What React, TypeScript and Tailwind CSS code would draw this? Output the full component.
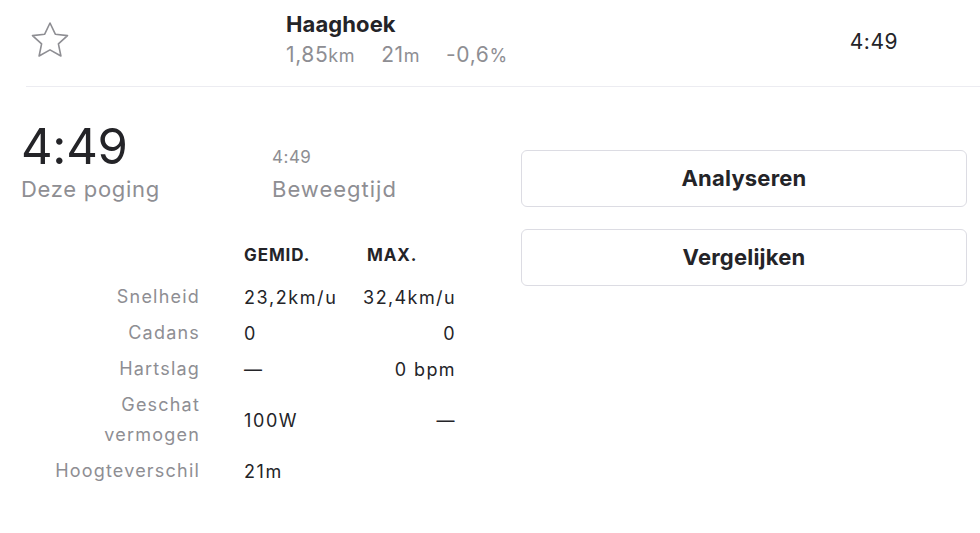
const font = { fontFamily: "Inter, 'Noto Sans', sans-serif" };

function StarIcon() {
  return (
    <svg width="40" height="38" viewBox="0 0 40 38" fill="none">
      <polygon
        points="20,2 25.3,13.2 37.5,14.6 28.4,22.9 30.9,35 20,28.9 9.1,35 11.6,22.9 2.5,14.6 14.7,13.2"
        stroke="#8e8e93"
        strokeWidth="1.6"
        strokeLinejoin="round"
      />
    </svg>
  );
}

const rows = [
  { label: ["Snelheid"], avg: "23,2km/u", max: "32,4km/u" },
  { label: ["Cadans"], avg: "0", max: "0" },
  { label: ["Hartslag"], avg: "—", max: "0 bpm" },
  { label: ["Geschat", "vermogen"], avg: "100W", max: "—" },
  { label: ["Hoogteverschil"], avg: "21m", max: "" },
];

export default function App() {
  return (
    <div className="w-[980px] h-[533px] bg-white text-[#242428] overflow-hidden" style={font}>
      <div className="ml-[26px] h-[87px] flex border-b border-[#ececf1]">
        <div className="w-[260px] pl-[4px] pt-[21px]">
          <StarIcon />
        </div>
        <div className="pt-[9px]">
          <div className="text-[22px] font-bold leading-[30px] tracking-[0.1px]">Haaghoek</div>
          <div className="flex gap-[26px] text-[21px] leading-[30px] text-[#8e8e93] mt-[1px] tracking-[0.6px]">
            <span>
              1,85<span className="text-[18px]">km</span>
            </span>
            <span>
              21<span className="text-[18px]">m</span>
            </span>
            <span>
              -0,6<span className="text-[18px]">%</span>
            </span>
          </div>
        </div>
        <div className="ml-auto mr-[82px] pt-[27px] text-[21px] leading-[30px] tracking-[0.5px]">4:49</div>
      </div>

      <div className="flex">
        <div className="w-[500px]">
          <div className="flex pl-[21px] pt-[30px]">
            <div className="w-[251px]">
              <div className="text-[49px] leading-[60px] tracking-[-0.3px]">4:49</div>
              <div className="text-[22px] leading-[28px] text-[#8e8e93] -mt-[2px] tracking-[0.7px]">Deze poging</div>
            </div>
            <div className="pt-[28px]">
              <div className="text-[17px] leading-[24px] text-[#8e8e93] tracking-[0.5px]">4:49</div>
              <div className="text-[22px] leading-[28px] text-[#8e8e93] mt-[6px] tracking-[1px]">Beweegtijd</div>
            </div>
          </div>

          <div className="mt-[34px] grid grid-cols-[200px_167px_88px] text-[18px] tracking-[1px]">
            <div />
            <div className="pl-[44px] font-bold text-[17px] leading-[36px] tracking-[0.9px]">GEMID.</div>
            <div className="font-bold text-[17px] leading-[36px] tracking-[0.9px]">MAX.</div>
            <div className="col-span-3 h-[6px]" />
            {rows.map((r) => (
              <div key={r.label.join(" ")} className="contents">
                <div className="text-right text-[#8e8e93] leading-[30px] py-[3px] tracking-[1.2px]">
                  {r.label.map((l) => (
                    <div key={l}>{l}</div>
                  ))}
                </div>
                <div className="pl-[44px] flex items-center tracking-[1.6px]">{r.avg}</div>
                <div className="flex items-center justify-end tracking-[1.4px] -mr-[1px]">{r.max}</div>
              </div>
            ))}
          </div>
        </div>

        <div className="flex-1 pl-[21px] pr-[13px] pt-[63px] flex flex-col gap-[22px]">
          <button className="h-[57px] rounded-[6px] border border-[#dcdce3] text-[22px] font-bold tracking-[0.2px]">
            Analyseren
          </button>
          <button className="h-[57px] rounded-[6px] border border-[#dcdce3] text-[22px] font-bold tracking-[0.2px]">
            Vergelijken
          </button>
        </div>
      </div>
    </div>
  );
}
